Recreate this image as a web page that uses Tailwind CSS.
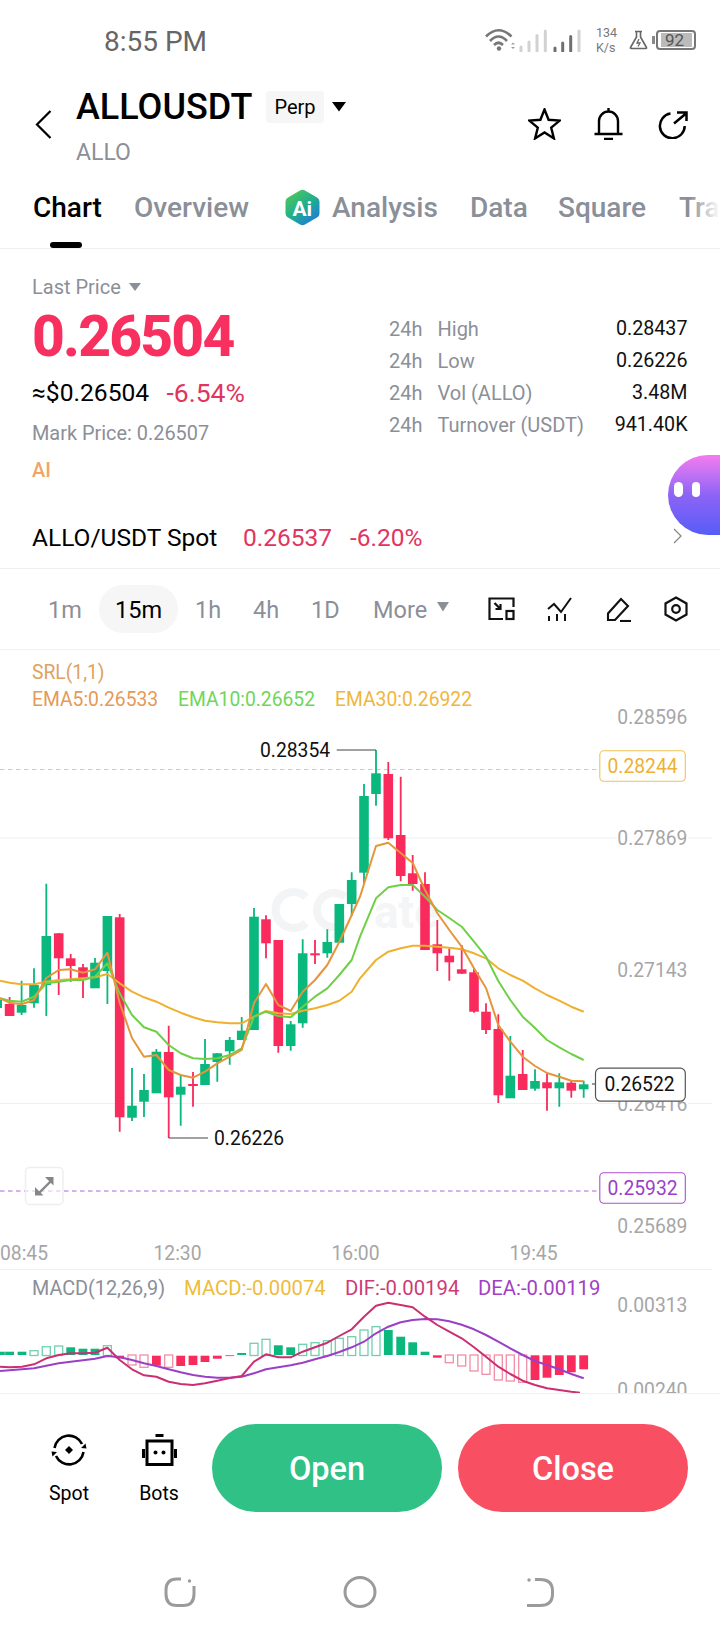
<!DOCTYPE html>
<html lang="en">
<head>
<meta charset="utf-8">
<script src="https://cdn.jsdelivr.net/npm/@tailwindcss/browser@4"></script>
<title>ALLOUSDT</title>
</head>
<body class="bg-white">
<div class="relative w-[720px] h-[1640px] overflow-hidden bg-white font-[Roboto,sans-serif] text-black">

  <!-- status bar -->
  <div class="h-[75px] flex items-start text-[#666]">
    <span class="ml-[104px] mt-[25px] w-[106px] shrink-0 text-[28px] leading-[34px] whitespace-nowrap">8:55 PM</span>
    <svg class="ml-[275px] mt-[28px] shrink-0" width="98" height="24" viewBox="485 28 98 24" fill="none">
      <path d="M486 36.5Q498.500 24 511.500 36.500M490 41Q498.500 32 507 41M494 45Q498.500 40.500 503 45" stroke="#777" stroke-width="2.600"/>
      <circle cx="499" cy="48.500" r="2.200" fill="#777"/>
      <path d="M511 44.500l2-2 2 2zM511 47l2 2 2-2z" fill="#999"/>
      <path d="M521 47v4M529 42v9M537 35.500v15.500M545.300 31v20M579 31v20" stroke="#d2d2d2" stroke-width="3" stroke-linecap="round"/>
      <path d="M555 48v3M562.700 43v8M570.700 36.500v14.500" stroke="#6f6f6f" stroke-width="3" stroke-linecap="round"/>
    </svg>
    <div class="ml-[13px] mt-[25px] w-[30px] shrink-0 flex flex-col text-[12.5px] leading-[15px] text-[#777]"><span>134</span><span>K/s</span></div>
    <svg class="ml-[3px] mt-[30px] shrink-0" width="20" height="20" viewBox="0 0 20 20" fill="none">
      <path d="M6 1.500h7M7.500 2v5L1.500 17.500q-.5 1 1 1h14q1.500 0 1-1L11.500 7V2" stroke="#666" stroke-width="1.600"/>
      <path d="M10 9l-2 4h3l-2 3.500" stroke="#666" stroke-width="1.300"/>
    </svg>
    <div class="ml-[3px] mt-[36px] w-[2.500px] h-[8px] shrink-0 bg-[#888]"></div>
    <div class="ml-[1px] mt-[30px] w-[40px] h-[20px] shrink-0 rounded-[4px] border-2 border-[#777] flex justify-end items-center pr-[1.500px]">
      <div class="w-[31px] h-[14px] bg-[#bbb] flex items-center pl-[4px] text-[17px] leading-[14px] text-[#555]">92</div>
    </div>
  </div>

  <!-- header -->
  <div class="h-[90px] flex items-start">
    <svg class="ml-[35px] mt-[35px] shrink-0" width="17" height="29" viewBox="0 0 17 29" fill="none"><path d="M15.500 1L2 14.500L15.500 28" stroke="#000" stroke-width="2.200"/></svg>
    <div class="ml-[24px] w-[452px] shrink-0 flex flex-col">
      <div class="flex items-center h-[32px] mt-[16px]">
        <span class="w-[177px] text-[36px] leading-[32px] font-medium whitespace-nowrap">ALLOUSDT</span>
        <span class="ml-[13px] w-[58px] h-[32px] bg-[#f6f6f6] rounded-[3px] flex items-center justify-center text-[20px] leading-[32px]">Perp</span>
        <svg class="ml-[8px]" width="14" height="10" viewBox="0 0 14 10"><path d="M0 0h14l-7 9.500z" fill="#000"/></svg>
      </div>
      <span class="mt-[18px] text-[23px] leading-[24px] text-[#8b8f98]">ALLO</span>
    </div>
    <svg class="mt-[33px] shrink-0" width="33" height="32" viewBox="0 0 33 32" fill="none"><path d="M16.500 1.500L20.600 11.800L31.700 12.600L23.200 19.700L25.900 30.400L16.500 24.500L7.100 30.400L9.800 19.700L1.300 12.600L12.400 11.800Z" stroke="#000" stroke-width="2.400"/></svg>
    <svg class="ml-[33px] mt-[33px] shrink-0" width="29" height="32" viewBox="0 0 29 32" fill="none"><path d="M14.500 0v3M5 25.500V13a9.500 9.500 0 0 1 19 0v12.500M.5 26h28M10 31h9" stroke="#000" stroke-width="2.400"/></svg>
    <svg class="ml-[35px] mt-[36px] shrink-0" width="30" height="28" viewBox="0 0 30 28" fill="none"><path d="M12.500 2.600A12.400 12.400 0 1 0 26.700 15" stroke="#000" stroke-width="2.500"/><path d="M16 12.500L28 2.500M19 1.500h9.500V10" stroke="#000" stroke-width="2.500"/></svg>
  </div>

  <!-- tabs -->
  <div class="relative h-[84px] border-b border-[#f0f0f0] overflow-hidden flex items-start text-[28px] leading-[34px] text-[#8b8f98] font-medium whitespace-nowrap">
    <span class="relative ml-[33px] mt-[26px] w-[68px] h-[58px] shrink-0 text-black">Chart<span class="absolute left-[17px] top-[51px] w-[32px] h-[6px] rounded-full bg-black"></span></span>
    <span class="ml-[33px] mt-[26px] w-[114px] shrink-0">Overview</span>
    <svg class="ml-[37px] mt-[24px] shrink-0" width="35" height="37" viewBox="0 0 35 37">
      <defs><linearGradient id="aig" x1="0.100" y1="0.100" x2="0.800" y2="1"><stop offset="0" stop-color="#4fc65b"/><stop offset="0.500" stop-color="#1fae8f"/><stop offset="1" stop-color="#1f78e0"/></linearGradient></defs>
      <path d="M15 1.500q2.500-1.500 5 0L32 8.500q2.500 1.500 2.500 4v12q0 2.500-2.500 4L20 35.500q-2.500 1.500-5 0L3 28.500q-2.500-1.500-2.500-4v-12q0-2.500 2.500-4z" fill="url(#aig)"/>
      <text x="7.500" y="27" fill="#fff" font-size="21" font-weight="700" font-family="Roboto">Ai</text>
    </svg>
    <span class="ml-[12px] mt-[26px] w-[104px] shrink-0">Analysis</span>
    <span class="ml-[34px] mt-[26px] w-[55px] shrink-0">Data</span>
    <span class="ml-[33px] mt-[26px] w-[88px] shrink-0">Square</span>
    <span class="ml-[33px] mt-[26px] shrink-0">Trade</span>
    <div class="absolute right-0 top-0 h-full w-[30px] bg-linear-to-r from-white/0 to-white"></div>
  </div>

  <!-- price block -->
  <div class="h-[259px] flex justify-between">
    <div class="pl-[32px] flex flex-col items-start">
      <div class="mt-[26px] flex items-center h-[24px] text-[20px] leading-[24px] text-[#8b8f98]">Last Price<svg class="ml-[8px]" width="12" height="8" viewBox="0 0 12 8"><path d="M0 0h12l-6 8z" fill="#8b8f98"/></svg></div>
      <div class="mt-[8px] h-[60px] text-[57px] leading-[60px] font-extrabold tracking-[-1.800px] text-[#f7305f]">0.26504</div>
      <div class="mt-[11px] h-[30px] flex items-center leading-[30px]"><span class="w-[134.500px] text-[24.600px]">≈$0.26504</span><span class="text-[26.500px] text-[#e0355f]">-6.54%</span></div>
      <div class="mt-[14px] h-[24px] text-[19.900px] leading-[24px] text-[#8b8f98]">Mark Price: 0.26507</div>
      <div class="mt-[12px] h-[24px] text-[20px] leading-[24px] font-medium text-[#f2a468]">AI</div>
    </div>
    <div class="mt-[64px] mr-[32.500px] w-[298.500px] h-[128px] grid grid-cols-[48.500px_1fr_auto] auto-rows-[32px] items-center text-[20px] leading-[32px] text-[#8b8f98]">
      <span>24h</span><span>High</span><span class="text-right text-[19.700px] text-[#111]">0.28437</span>
      <span>24h</span><span>Low</span><span class="text-right text-[19.700px] text-[#111]">0.26226</span>
      <span>24h</span><span>Vol (ALLO)</span><span class="text-right text-[19.700px] text-[#111]">3.48M</span>
      <span>24h</span><span>Turnover (USDT)</span><span class="text-right text-[19.700px] text-[#111]">941.40K</span>
    </div>
  </div>

  <!-- spot row -->
  <div class="h-[61px] border-b border-[#eeeeee] flex items-start text-[24.500px] leading-[30px]">
    <span class="ml-[32px] mt-[15px] w-[186px] shrink-0 whitespace-nowrap">ALLO/USDT Spot</span>
    <span class="ml-[25px] mt-[15px] w-[107px] shrink-0 text-[#e0355f]">0.26537</span>
    <span class="mt-[15px] shrink-0 text-[#e0355f]">-6.20%</span>
    <svg class="ml-auto mr-[38px] mt-[20px] shrink-0" width="9" height="16" viewBox="0 0 9 16" fill="none"><path d="M1 1l7 7-7 7" stroke="#888" stroke-width="1.300"/></svg>
  </div>

  <!-- timeframes -->
  <div class="h-[81px] border-b border-[#f0f0f0] flex items-center text-[23.500px] leading-[30px] text-[#8b8f98]">
    <span class="ml-[48px] mt-[1px] w-[33px]">1m</span>
    <span class="ml-[18px] w-[79px] h-[48px] rounded-[24px] bg-[#f6f6f6] flex items-center justify-center pt-[1px] text-black">15m</span>
    <span class="ml-[17px] mt-[1px] w-[26px]">1h</span>
    <span class="ml-[32px] mt-[1px] w-[27px]">4h</span>
    <span class="ml-[31px] mt-[1px] w-[28px]">1D</span>
    <span class="ml-[34px] mt-[1px] w-[56px]">More</span>
    <svg class="ml-[8px] mb-[4px]" width="12" height="10" viewBox="0 0 12 10"><path d="M0 0h12l-6 9.500z" fill="#8b8f98"/></svg>
    <svg class="ml-[39px]" width="27" height="24" viewBox="0 0 27 24" fill="none" stroke="#111" stroke-width="2.200"><path d="M25.500 10V1.500H1.500V22H15"/><rect x="18.500" y="14" width="7" height="8"/><path d="M6.500 6l6 6M12.500 7v5H7.500"/></svg>
    <svg class="ml-[32px]" width="26" height="25" viewBox="0 0 26 25" fill="none" stroke="#111" stroke-width="2"><path d="M1 12l6-5 7 8L24 1"/><path d="M2 19v5M10 17v7M18 17v7"/></svg>
    <svg class="ml-[33px]" width="26" height="25" viewBox="0 0 26 25" fill="none" stroke="#111" stroke-width="2.100"><path d="M2 23L2 16.500L15 2L22 9L9 23Z"/><path d="M14 24H25"/></svg>
    <svg class="ml-[32px]" width="24" height="26" viewBox="0 0 24 26" fill="none" stroke="#111" stroke-width="2.200"><path d="M12 1.500l10.500 6v11l-10.500 6-10.500-6v-11z"/><circle cx="12" cy="13" r="3.800"/></svg>
  </div>

  <!-- bubble -->
  <div class="absolute left-[668px] top-[455px] w-[52px] h-[80px] rounded-l-[46px] bg-linear-to-b from-[#f47bef] via-[#8d63f6] to-[#565cf6] flex items-start">
    <span class="ml-[6px] mt-[27px] w-[9px] h-[15px] rounded-full bg-white"></span>
    <span class="ml-[9px] mt-[27px] w-[8px] h-[15px] rounded-full bg-white"></span>
  </div>

  <!-- chart -->
  <div class="relative h-[743px] overflow-hidden">
    <div class="relative z-10 pl-[32px] pt-[9px] flex flex-col text-[19.300px] leading-[27px]">
      <span class="text-[#e0a25e]">SRL(1,1)</span>
      <div class="flex"><span class="w-[146px] text-[#e49a58]">EMA5:0.26533</span><span class="w-[157px] text-[#6fd65a]">EMA10:0.26652</span><span class="text-[#efb63e]">EMA30:0.26922</span></div>
    </div>
    <svg class="absolute left-0 top-0" width="720" height="743" viewBox="0 650 720 743" font-family="Roboto" font-size="19.300">
      <!-- watermark -->
      <g fill="none" stroke="#f3f4f5" stroke-width="8"><path d="M306 897A18 18 0 1 0 306 923"/><path d="M345 897A17 17 0 1 0 345 923"/></g>
      <text x="374" y="928" font-size="46" font-weight="700" fill="#f4f5f6">ate</text>
      <!-- grid -->
      <path d="M0 838H712M0 1103.500H712M0 1269.500H712" stroke="#efefef" stroke-width="1"/>
      <path d="M0 769.500H599" stroke="#f0cc66" stroke-width="1.100" stroke-dasharray="4.500 3.500"/>
      <path d="M0 1191H597" stroke="#b264d8" stroke-width="1.100" stroke-dasharray="4.500 3.500"/>
      <!-- wicks -->
      <path stroke="#0ab77d" stroke-width="1.800" fill="none" d="M21.600 980.700V1015M34 968.300V1007.700M46.300 883.700V1016M95 958V988M107.400 916V1004M132 1068V1121M144 1074V1117M156.400 1049V1052M180.700 1075V1125.700M205 1039V1064M217.300 1053V1081.700M229.700 1037V1064.700M241.700 1017V1040M254 908V1030M290.700 1021V1050.700M302.700 939.300V1027.700M327.300 929.300V957.700M339.300 904V943M351.700 872.300V916M364 784V883M376 750V805.700M510.300 1036V1098M535 1069.300V1090.700M559.300 1073.300V1106.700M583.700 1080.700V1097.700"/>
      <path stroke="#f82b5c" stroke-width="1.800" fill="none" d="M9.600 997V1016M58.700 933V995M70.700 954V981.700M83 964V998M119.700 914V1131.700M168.700 1025.700V1138M193 1072V1106.700M266 915.300V958.300M278.300 940V1052.700M315 940V964M388.300 762V840M400.700 776.700V881.300M412.700 855V890.700M425 872.300V950M437.300 920V971M449.300 948.300V980.700M461.700 945V974M474 968V1012.700M486 1003.300V1034M498.300 1014.300V1103M522.700 1050V1090M547 1073.300V1110.700M571.300 1081V1097.700"/>
      <!-- bodies -->
      <g fill="#0ab77d">
        <rect x="-7.600" y="1000" width="9.600" height="8"/><rect x="16.800" y="1005" width="9.600" height="7.700"/><rect x="29.200" y="985" width="9.600" height="18.300"/><rect x="41.500" y="936" width="9.600" height="49"/><rect x="90.200" y="962.700" width="9.600" height="25.600"/><rect x="102.600" y="916" width="9.600" height="55"/><rect x="127.200" y="1105.700" width="9.600" height="12"/><rect x="139.200" y="1090" width="9.600" height="11.700"/><rect x="151.600" y="1051.700" width="9.600" height="41.600"/><rect x="175.900" y="1086.700" width="9.600" height="8"/><rect x="200.200" y="1064" width="9.600" height="21"/><rect x="212.500" y="1053.300" width="9.600" height="8.700"/><rect x="224.900" y="1040" width="9.600" height="11.300"/><rect x="236.900" y="1030.700" width="9.600" height="9.300"/><rect x="249.200" y="916.700" width="9.600" height="113.300"/><rect x="285.900" y="1024.300" width="9.600" height="21.700"/><rect x="297.900" y="953.300" width="9.600" height="70"/><rect x="322.500" y="942" width="9.600" height="11.300"/><rect x="334.500" y="904" width="9.600" height="38.700"/><rect x="346.900" y="880" width="9.600" height="24"/><rect x="359.200" y="796" width="9.600" height="76.700"/><rect x="371.200" y="773.300" width="9.600" height="20.700"/><rect x="505.500" y="1075.700" width="9.600" height="22.600"/><rect x="530.200" y="1081" width="9.600" height="7.700"/><rect x="554.500" y="1082.300" width="9.600" height="6"/><rect x="578.900" y="1084.300" width="9.600" height="5"/>
      </g>
      <g fill="#f82b5c">
        <rect x="4.800" y="1004" width="9.600" height="12"/><rect x="53.900" y="933.300" width="9.600" height="25"/><rect x="65.900" y="958.300" width="9.600" height="7.700"/><rect x="78.200" y="967.300" width="9.600" height="10.700"/><rect x="114.900" y="917.300" width="9.600" height="200"/><rect x="163.900" y="1052" width="9.600" height="45.300"/><rect x="188.200" y="1084" width="9.600" height="2"/><rect x="261.200" y="919.300" width="9.600" height="24"/><rect x="273.500" y="940" width="9.600" height="106"/><rect x="310.200" y="953.300" width="9.600" height="2"/><rect x="383.500" y="774" width="9.600" height="64.300"/><rect x="395.900" y="835" width="9.600" height="41"/><rect x="407.900" y="873.300" width="9.600" height="10.700"/><rect x="420.200" y="884" width="9.600" height="66"/><rect x="432.500" y="944.300" width="9.600" height="9"/><rect x="444.500" y="955.700" width="9.600" height="6.600"/><rect x="456.900" y="969.300" width="9.600" height="4.400"/><rect x="469.200" y="972.300" width="9.600" height="39.400"/><rect x="481.200" y="1011.700" width="9.600" height="18.300"/><rect x="493.500" y="1029" width="9.600" height="66.300"/><rect x="517.900" y="1074" width="9.600" height="16"/><rect x="542.200" y="1082.300" width="9.600" height="6"/><rect x="566.500" y="1082.700" width="9.600" height="8"/>
      </g>
      <!-- EMAs -->
      <g fill="none" stroke-width="2" stroke-linejoin="round">
        <polyline stroke="#efb02f" points="0,980.700 9.600,982.700 21.600,984.300 34,984.300 46.300,981.700 58.700,980 70.700,979.300 83,978.300 95,977.300 107.400,974 119.700,983.300 132,991.700 144,997.300 156.400,1001.700 168.700,1007.700 180.700,1012.700 193,1017.300 205,1020.700 217.300,1022.300 229.700,1023.300 241.700,1023.300 254,1016.700 266,1011 278.300,1013.300 290.700,1014 302.700,1010.700 315,1008.300 327.300,1005 339.300,1000.700 351.700,991.700 360,978.300 376,960 388.300,951.700 400.700,948.300 412.700,945.700 425,945.700 437.300,946.700 449.300,947.700 461.700,949.300 474,953.300 486,958.300 498.300,968.300 510.300,975 522.700,980.700 535,988.300 547,995 559.300,1000.700 571.300,1006.700 583.700,1011.700"/>
        <polyline stroke="#6fd048" points="0,998.300 9.600,1000.700 21.600,1001.700 34,996.700 46.300,983.300 58.700,981.700 70.700,980 83,980 95,976.700 107.400,963.300 119.700,993.300 132,1015 144,1027.300 156.400,1031.700 168.700,1045 180.700,1053.300 193,1058.300 205,1059 217.300,1058.300 229.700,1055 241.700,1048.300 254,1016.700 266,1011.700 278.300,1016 290.700,1017.300 302.700,1006.700 315,996.700 327.300,988.300 339.300,975 351.700,960 360,936.700 376,898.300 388.300,887.300 400.700,885 412.700,885 425,896.700 437.300,910 449.300,918 461.700,926.700 474,941.700 486,956.700 498.300,981 510.300,1000 522.700,1016.700 535,1028 547,1040 559.300,1047.300 571.300,1054 583.700,1060"/>
        <polyline stroke="#e5953a" points="0,998.300 9.600,1002.700 21.600,1004.300 34,1000 46.300,978 58.700,970 70.700,969.300 83,972.700 95,969.300 107.400,952.700 119.700,1003 132,1038 144,1056.700 156.400,1055 168.700,1070 180.700,1075 193,1077.700 205,1071.700 217.300,1063.300 229.700,1056.700 241.700,1050 254,1003 266,984 278.300,1005 290.700,1011 302.700,991.700 315,980 327.300,965 339.300,942 351.700,915 360,896.700 376,846 388.300,842.700 400.700,853 412.700,863 425,890 437.300,913 449.300,930 461.700,946.700 474,968.300 486,988 498.300,1025 510.300,1041.700 522.700,1056.700 535,1066 547,1073 559.300,1076.700 571.300,1080.700 583.700,1081.300"/>
      </g>
      <!-- high / low -->
      <path d="M336.700 750H376M168.700 1138H208" stroke="#444" stroke-width="1.200" fill="none"/>
      <text x="260" y="757" fill="#111">0.28354</text>
      <text x="214" y="1145" fill="#111">0.26226</text>
      <!-- axis -->
      <g fill="#a6a6a6">
        <text x="617.300" y="724">0.28596</text>
        <rect x="617" y="828" width="71" height="20" fill="#fff"/><text x="617.300" y="845">0.27869</text>
        <text x="617.300" y="977">0.27143</text>
        <rect x="617" y="1094" width="71" height="20" fill="#fff"/><text x="617.300" y="1111">0.26416</text>
        <text x="617.300" y="1233">0.25689</text>
        <text x="0" y="1260">08:45</text><text x="153.500" y="1260">12:30</text><text x="331.500" y="1260">16:00</text><text x="509.500" y="1260">19:45</text>
        <text x="617.300" y="1312">0.00313</text>
        <text x="617.300" y="1397">0.00240</text>
      </g>
      <!-- price tags -->
      <rect x="599.800" y="750.800" width="85.500" height="30.500" rx="4" fill="#fff" stroke="#f0c356" stroke-width="1.100"/>
      <text x="607.500" y="773" fill="#eeb133">0.28244</text>
      <rect x="599.800" y="1172.800" width="85.500" height="30.500" rx="4" fill="#fff" stroke="#a850d2" stroke-width="1.100"/>
      <text x="607.500" y="1195" fill="#9a3fc8">0.25932</text>
      <path d="M592 1084H595" stroke="#555" stroke-width="1.200"/>
      <rect x="595.500" y="1068.200" width="89.800" height="33" rx="5" fill="#fff" stroke="#555" stroke-width="1.200"/>
      <text x="604.500" y="1091" fill="#111">0.26522</text>
      <!-- expand button -->
      <rect x="25.500" y="1167.500" width="37.500" height="37" rx="4" fill="#fff" fill-opacity="0.600" stroke="#efefef" stroke-width="1.500"/>
      <path d="M39 1193l13-13" stroke="#868686" stroke-width="2.400"/><path d="M45 1177h8.500v8.500zM35 1187v8.500h8.500z" fill="#868686"/>
      <!-- MACD legend -->
      <text x="32" y="1294.500" font-size="19.800" fill="#8b8f98">MACD(12,26,9)</text>
      <text x="184" y="1294.500" font-size="20.300" fill="#eebc3c">MACD:-0.00074</text>
      <text x="345" y="1294.500" font-size="20.300" fill="#cc3a78">DIF:-0.00194</text>
      <text x="478" y="1294.500" font-size="20.300" fill="#a23fc4">DEA:-0.00119</text>
      <!-- histogram -->
      <g fill="#0ab77d">
        <rect x="-4" y="1351.700" width="8.800" height="3.300"/><rect x="5.200" y="1351.700" width="8.800" height="3.300"/><rect x="17.600" y="1351.700" width="8.800" height="3.300"/><rect x="66.300" y="1347.300" width="8.800" height="7.700"/><rect x="78.600" y="1348.700" width="8.800" height="6.300"/><rect x="90.600" y="1348.700" width="8.800" height="6.300"/><rect x="237.300" y="1353" width="8.800" height="2"/><rect x="273.900" y="1345.300" width="8.800" height="9.700"/><rect x="286.300" y="1347.300" width="8.800" height="7.700"/><rect x="383.900" y="1330" width="8.800" height="25"/><rect x="396.300" y="1336.700" width="8.800" height="18.300"/><rect x="408.300" y="1342.300" width="8.800" height="12.700"/><rect x="420.600" y="1351.700" width="8.800" height="3.300"/>
      </g>
      <g fill="#fff" stroke="#72cfae" stroke-width="1.300">
        <rect x="30" y="1350.700" width="8" height="4.800"/><rect x="42.300" y="1346.700" width="8" height="8.800"/><rect x="54.700" y="1346" width="8" height="9.500"/><rect x="103.400" y="1345.700" width="8" height="9.800"/><rect x="250" y="1343.300" width="8" height="12.200"/><rect x="262" y="1339.300" width="8" height="16.200"/><rect x="298.700" y="1344.300" width="8" height="11.200"/><rect x="311" y="1342.700" width="8" height="12.800"/><rect x="323.300" y="1340.700" width="8" height="14.800"/><rect x="335.300" y="1338.300" width="8" height="17.200"/><rect x="347.700" y="1336.700" width="8" height="18.800"/><rect x="360" y="1330" width="8" height="25.500"/><rect x="372" y="1326.700" width="8" height="28.800"/>
      </g>
      <g fill="#f82b5c">
        <rect x="115.300" y="1355.700" width="8.800" height="2.600"/><rect x="152" y="1355.700" width="8.800" height="10"/><rect x="176.300" y="1355.700" width="8.800" height="10.300"/><rect x="188.600" y="1355.700" width="8.800" height="9.300"/><rect x="200.600" y="1355.700" width="8.800" height="6.300"/><rect x="212.900" y="1355.700" width="8.800" height="3"/><rect x="225.300" y="1355.300" width="8.800" height="0.800"/><rect x="432.900" y="1355.300" width="8.800" height="2.400"/><rect x="530.600" y="1355.300" width="8.800" height="24.700"/><rect x="542.600" y="1355.300" width="8.800" height="22.400"/><rect x="554.900" y="1355.300" width="8.800" height="19.700"/><rect x="566.900" y="1355.300" width="8.800" height="17"/><rect x="579.300" y="1355.300" width="8.800" height="14"/>
      </g>
      <g fill="#fff" stroke="#f08ea5" stroke-width="1.300">
        <rect x="128" y="1355" width="8" height="10"/><rect x="140" y="1355" width="8" height="12.300"/><rect x="164.700" y="1355" width="8" height="12.300"/><rect x="445.300" y="1355" width="8" height="7.700"/><rect x="457.700" y="1355" width="8" height="11"/><rect x="470" y="1355" width="8" height="16"/><rect x="482" y="1355" width="8" height="19.300"/><rect x="494.300" y="1355" width="8" height="25"/><rect x="506.300" y="1355" width="8" height="26"/><rect x="518.700" y="1355" width="8" height="27.300"/>
      </g>
      <!-- DIF / DEA -->
      <g fill="none" stroke-width="2" stroke-linejoin="round">
        <polyline stroke="#9b3fc7" points="0,1371 22,1369.300 34,1368.300 46.300,1365.700 58.700,1363.300 70.700,1361.700 83,1360.300 95,1358.700 107.400,1356 119.700,1357.300 132,1360 144,1363.300 156.400,1366 168.700,1369.300 180.700,1372.300 193,1375 205,1376.700 217.300,1377.700 229.700,1377.700 241.700,1376.700 254,1373.300 266,1369.300 278.300,1367.300 290.700,1365.300 302.700,1362.700 315,1359.300 327.300,1356 339.300,1352 351.700,1347.300 364,1341.700 376,1333.300 388.300,1326.700 400.700,1322.300 412.700,1320 425,1319 437.300,1319.300 449.300,1321.300 461.700,1324.700 474,1329.300 486,1335 498.300,1341.700 510.300,1348.300 522.700,1355 535,1361 547,1365 559.300,1369.300 571.300,1374 583.700,1378.300"/>
        <polyline stroke="#cb2f72" points="0,1366.700 10,1367.300 22,1366.700 34,1364.300 46.300,1358.300 58.700,1355 70.700,1353.300 83,1353.300 95,1352.700 107.400,1347.700 119.700,1360 132,1369.300 144,1375.300 156.400,1376.700 168.700,1381.700 180.700,1384 193,1385 205,1383.300 217.300,1380.700 229.700,1378 241.700,1376 254,1361.700 266,1354.300 278.300,1357.300 290.700,1357.300 302.700,1351.700 315,1347.300 327.300,1342.700 339.300,1336 351.700,1329.300 364,1316.700 376,1305.700 388.300,1302.700 400.700,1305 412.700,1307.300 425,1316.700 437.300,1325 449.300,1331.700 461.700,1338.300 474,1347.300 486,1356.700 498.300,1366.700 510.300,1374 522.700,1380.700 535,1385 547,1388.300 559.300,1390 571.300,1391.700 580,1392.700"/>
      </g>
    </svg>
  </div>

  <!-- trade bar -->
  <div class="border-t border-[#f0f0f0] h-[247px] flex flex-col">
    <div class="flex items-start pt-[30px]">
      <div class="ml-[47px] w-[44px] flex flex-col items-center text-[19.500px] leading-[24px]">
        <svg class="mt-[9px]" width="36" height="34" viewBox="0 0 36 34" fill="none" stroke="#000" stroke-width="2.600"><path d="M3.500 15A14.500 14.500 0 0 1 31 11"/><path d="M32.500 19A14.500 14.500 0 0 1 5 23"/><path d="M30 15l4.500-4.500 1 5zM6 19l-4.500 4.500-1-5z" fill="#000" stroke="none"/><path d="M18 13l4 4-4 4-4-4z" fill="#000" stroke="none"/></svg>
        <span class="mt-[15px]">Spot</span>
      </div>
      <div class="ml-[46px] w-[44px] flex flex-col items-center text-[19.500px] leading-[24px]">
        <svg class="mt-[10px]" width="35" height="32" viewBox="0 0 35 32" fill="none" stroke="#000" stroke-width="3"><path d="M13.500 1.500h8" stroke-width="3"/><rect x="5" y="7" width="25" height="23.500"/><path d="M1.500 15v9M33.500 15v9" stroke-width="3"/><circle cx="13.500" cy="18.500" r="2" fill="#000" stroke="none"/><circle cx="21.500" cy="18.500" r="2" fill="#000" stroke="none"/></svg>
        <span class="mt-[16px]">Bots</span>
      </div>
      <div class="ml-[31px] w-[230px] h-[88px] rounded-full bg-[#2fc186] flex items-center justify-center pt-[3px] text-[32.500px] leading-[85px] font-medium text-white">Open</div>
      <div class="ml-[16px] w-[230px] h-[88px] rounded-full bg-[#f94f63] flex items-center justify-center pt-[3px] text-[32.500px] leading-[85px] font-medium text-white">Close</div>
    </div>
    <!-- navigation -->
    <div class="flex items-start mt-[64px]">
      <svg class="ml-[164px]" width="32" height="32" viewBox="0 0 32 32" fill="none" stroke="#9b9b9b" stroke-width="3"><path d="M17 3H13Q2 3 2 14V18Q2 29.500 13 29.500H19Q30 29.500 30 18V10"/><circle cx="25.500" cy="5" r="1.700" fill="#9b9b9b" stroke="none"/></svg>
      <svg class="ml-[147px]" width="34" height="32" viewBox="0 0 34 32" fill="none" stroke="#9b9b9b" stroke-width="3"><ellipse cx="17" cy="16" rx="15" ry="14.500"/></svg>
      <svg class="ml-[149px]" width="28" height="32" viewBox="0 0 28 32" fill="none" stroke="#9b9b9b" stroke-width="3"><path d="M9 3.500H14Q26.500 3.500 26.500 15V18Q26.500 29.500 14 29.500H1"/><circle cx="3" cy="4" r="1.700" fill="#9b9b9b" stroke="none"/></svg>
    </div>
  </div>
</div>
</body>
</html>
